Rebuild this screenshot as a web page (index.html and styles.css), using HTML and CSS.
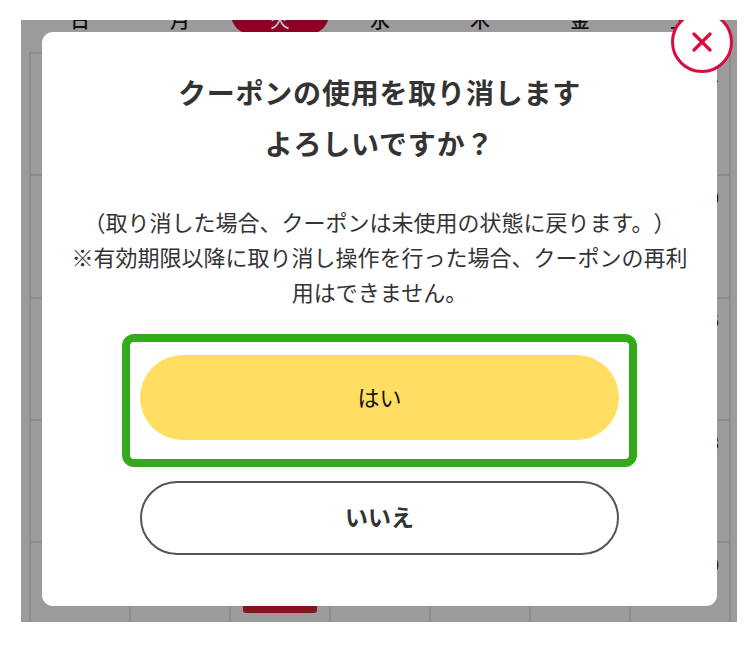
FILE: index.html
```html
<!DOCTYPE html>
<html lang="ja">
<head>
<meta charset="utf-8">
<title>クーポンの使用を取り消します</title>
<link rel="stylesheet" href="styles.css">
</head>
<body>
<div class="stage">
  <div class="calendar">
    <div class="week-head">
      <span>日</span><span>月</span><span class="today"><b>火</b></span><span>水</span><span>木</span><span>金</span><span>土</span>
    </div>
    <div class="grid">
      <div class="cell"></div><div class="cell"></div><div class="cell"></div><div class="cell"></div><div class="cell"></div><div class="cell"></div><div class="cell"><i>1</i></div>
      <div class="cell"></div><div class="cell"></div><div class="cell"></div><div class="cell"></div><div class="cell"></div><div class="cell"></div><div class="cell"><i>0</i></div>
      <div class="cell"></div><div class="cell"></div><div class="cell"></div><div class="cell"></div><div class="cell"></div><div class="cell"></div><div class="cell"><i>5</i></div>
      <div class="cell"></div><div class="cell"></div><div class="cell"></div><div class="cell"></div><div class="cell"></div><div class="cell"></div><div class="cell"><i>8</i></div>
      <div class="cell"></div><div class="cell"></div><div class="cell chip-cell"><u></u></div><div class="cell"></div><div class="cell"></div><div class="cell"></div><div class="cell"><i>0</i></div>
    </div>
  </div>
  <section class="modal">
    <h1>クーポンの使用を取り消します<br>よろしいですか？</h1>
    <p>（取り消した場合、クーポンは未使用の状態に戻ります。）<br>※有効期限以降に取り消し操作を行った場合、クーポンの再利用はできません。</p>
    <div class="focus-ring"><button class="btn yes">はい</button></div>
    <button class="btn no">いいえ</button>
  </section>
  <button class="close" aria-label="閉じる">
    <svg width="20" height="20" viewBox="0 0 20 20"><path d="M2 2L18 18M18 2L2 18" fill="none" stroke="#dc0a3e" stroke-width="3.2" stroke-linecap="round"/></svg>
  </button>
</div>
</body>
</html>
```
FILE: styles.css
```css
* { box-sizing: border-box; }
html, body { margin: 0; background: #fff; }
body { padding: 20px 13px 27px 21px; font-family: "Noto Sans CJK JP", "Noto Sans", sans-serif; color: #333; text-spacing-trim: space-all; }
.stage { position: relative; width: 716px; height: 602px; background: #9b9b9b; overflow: hidden; }
.calendar { padding-left: 9px; }
.week-head { display: grid; grid-template-columns: repeat(7, 100px); height: 32px; color: #111; font-size: 20px; line-height: 24px; text-align: center; font-weight: 500; }
.week-head span { margin-top: -12px; }
.week-head .today { margin: -14px 0 0 1px; width: 98px; height: 28px; padding-top: 2px; background: #8e0026; color: #c9c9c9; border-radius: 0 0 20px 20px; }
.week-head .today b { font-weight: 400; }
.grid { display: grid; grid-template-columns: repeat(7, 100px); grid-auto-rows: 122.3px; margin-left: -1px; border-left: 2px solid #8c8c8c; width: 702px; }
.cell { position: relative; border-top: 2px solid #8c8c8c; border-right: 2px solid #8c8c8c; }
.cell i { position: absolute; right: 10px; top: 9px; font-style: normal; font-size: 16px; color: #111; }
.chip-cell u { position: absolute; left: 12px; top: 40px; width: 74px; height: 30px; background: #841420; border-radius: 3px; }
.modal { position: absolute; left: 21px; top: 12px; width: 675px; height: 574px; background: #fff; border-radius: 11px; padding: 35px 24px 0; display: flex; flex-direction: column; align-items: center; text-align: center; }
.modal h1 { margin: 0; font-size: 28px; line-height: 51px; font-weight: 700; color: #333; letter-spacing: .8px; }
.modal p { margin: 35px 0 0; font-size: 22px; line-height: 35px; color: #333; width: 627px; }
.focus-ring { margin-top: 25px; width: 515px; height: 133px; border: 8px solid #35a91c; border-radius: 12px; padding: 13px 10px; flex: none; }
.btn { display: block; font-family: inherit; width: 479px; border-radius: 43px; flex: none; }
.yes { height: 85px; padding: 0 0 3px; background: #ffde62; border: 0; font-size: 22px; font-weight: 400; color: #111; }
.no { margin-top: 14px; height: 74px; padding: 0 0 5px; background: #fff; border: 2px solid #555; font-size: 23px; font-weight: 700; color: #333; }
.close { position: absolute; left: 650px; top: -9px; width: 62px; height: 62px; padding: 0; border: 3px solid #dc0a3e; border-radius: 50%; background: #fff; display: flex; align-items: center; justify-content: center; }
```
